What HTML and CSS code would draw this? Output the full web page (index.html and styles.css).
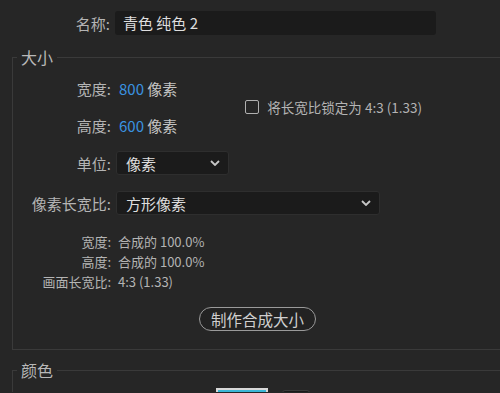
FILE: index.html
```html
<!DOCTYPE html>
<html lang="zh-CN">
<head>
    <meta charset="UTF-8">
    <title>纯色设置</title>
    <link rel="stylesheet" href="styles.css">
</head>
<body>
    <div class="panel">
        <div class="name-row">
            <label class="label">名称:</label>
            <div class="text-input">青色 纯色 2</div>
        </div>

        <fieldset class="group">
            <legend>大小</legend>

            <div class="dims">
                <div class="dim-rows">
                    <div class="row">
                        <span class="label">宽度:</span>
                        <span class="value"><span class="num">800</span> 像素</span>
                    </div>
                    <div class="row">
                        <span class="label">高度:</span>
                        <span class="value"><span class="num">600</span> 像素</span>
                    </div>
                </div>
                <div class="lock">
                    <span class="checkbox"></span>
                    <span>将长宽比锁定为 4:3 (1.33)</span>
                </div>
            </div>

            <div class="row unit-row">
                <span class="label">单位:</span>
                <div class="select select-unit">
                    <span>像素</span>
                    <svg class="chevron" width="10" height="6" viewBox="0 0 10 6"><path d="M1 1l4 4 4-4" fill="none" stroke="#c8c8c8" stroke-width="1.8"/></svg>
                </div>
            </div>

            <div class="row aspect-row">
                <span class="label">像素长宽比:</span>
                <div class="select select-aspect">
                    <span>方形像素</span>
                    <svg class="chevron" width="10" height="6" viewBox="0 0 10 6"><path d="M1 1l4 4 4-4" fill="none" stroke="#c8c8c8" stroke-width="1.8"/></svg>
                </div>
            </div>

            <div class="info">
                <div class="info-row"><span class="label">宽度:</span><span>合成的 100.0%</span></div>
                <div class="info-row"><span class="label">高度:</span><span>合成的 100.0%</span></div>
                <div class="info-row"><span class="label">画面长宽比:</span><span>4:3 (1.33)</span></div>
            </div>

            <div class="actions">
                <button type="button" class="pill">制作合成大小</button>
            </div>
        </fieldset>

        <fieldset class="group color-group">
            <legend>颜色</legend>
            <div class="swatches">
                <span class="swatch"></span>
                <span class="picker"></span>
            </div>
        </fieldset>
    </div>
</body>
</html>
```

FILE: styles.css
```css
html, body {
    margin: 0;
    padding: 0;
    background-color: #262626;
}
body {
    width: 500px;
    font-family: "Noto Sans CJK SC", "Noto Sans", sans-serif;
    font-size: 15px;
    color: #b4b4b4;
}
.panel {
    padding-top: 11px;
}
.label {
    width: 110px;
    flex: none;
    text-align: right;
    color: #b4b4b4;
}
.name-row {
    display: flex;
    align-items: center;
    gap: 5px;
    height: 24px;
}
.text-input {
    width: 313px;
    height: 24px;
    line-height: 24px;
    padding-left: 8px;
    background-color: #1b1b1b;
    border-radius: 3px;
    color: #dedede;
}
.group {
    margin: 12px 0 0 12px;
    width: 488px;
    box-sizing: border-box;
    padding: 0 0 18px 0;
    border: 1px solid #3a3a3a;
    border-right: none;
}
.group legend {
    margin-left: 4px;
    padding: 0 4px;
    font-size: 16px;
    line-height: 20px;
    color: #b8b8b8;
}
.group .label {
    width: 98px;
}
.dims {
    display: flex;
    align-items: center;
    margin-top: 9px;
}
.dim-rows {
    display: flex;
    flex-direction: column;
    gap: 13px;
}
.row {
    display: flex;
    align-items: center;
    gap: 5px;
    height: 24px;
}
.value {
    color: #c4c4c4;
    padding-left: 3px;
}
.num {
    color: #3a93e0;
}
.lock {
    display: flex;
    align-items: center;
    gap: 8px;
    margin-left: 68px;
    font-size: 13.5px;
    color: #b4b4b4;
}
.checkbox {
    width: 12px;
    height: 12px;
    border: 1.5px solid #b0b0b0;
    border-radius: 2px;
}
.select {
    display: flex;
    align-items: center;
    justify-content: space-between;
    box-sizing: border-box;
    height: 24px;
    padding: 0 8px 0 9px;
    background-color: #1b1b1b;
    border: 1px solid #2e2e2e;
    border-radius: 3px;
    color: #dedede;
}
.unit-row {
    margin-top: 14px;
}
.select-unit {
    width: 113px;
}
.aspect-row {
    margin-top: 16px;
}
.select-aspect {
    width: 264px;
}
.info {
    margin-top: 17px;
    font-size: 13px;
    color: #b4b4b4;
}
.info-row {
    display: flex;
    gap: 7px;
    height: 20px;
    line-height: 20px;
}
.actions {
    margin-top: 15px;
    padding-left: 186px;
}
.pill {
    width: 117px;
    height: 24px;
    padding: 0;
    background-color: #222222;
    border: 1.5px solid #9a9a9a;
    border-radius: 12px;
    font-family: inherit;
    font-size: 15.5px;
    color: #cfcfcf;
}
.color-group {
    margin-top: 10px;
    padding: 0;
    border-bottom: none;
}
.swatches {
    display: flex;
    align-items: flex-start;
    gap: 14px;
    height: 4px;
    padding: 8px 0 0 203px;
    overflow: hidden;
}
.swatch {
    flex: none;
    width: 48px;
    height: 20px;
    background-color: #3cb6d6;
    border: 2px solid #d8d8d8;
}
.picker {
    flex: none;
    width: 26px;
    height: 20px;
    background-color: #1a1a1a;
    border: 1px solid #3a3a3a;
    border-radius: 3px;
    margin-top: 2px;
}
```
